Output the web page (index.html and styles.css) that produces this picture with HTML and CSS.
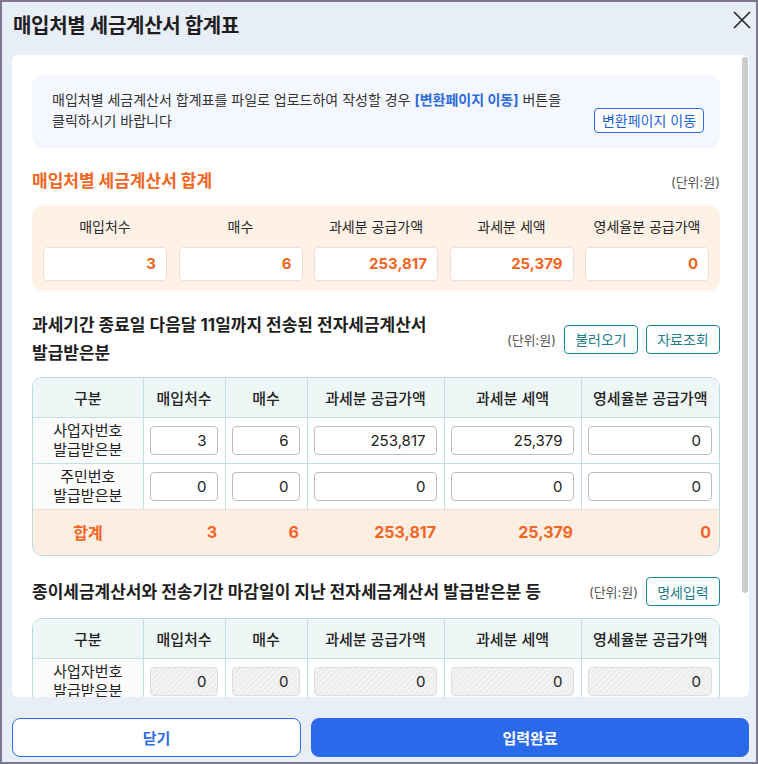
FILE: index.html
```html
<!DOCTYPE html>
<html lang="ko">
<head>
<meta charset="utf-8">
<title>매입처별 세금계산서 합계표</title>
<link rel="stylesheet" href="styles.css">
</head>
<body>
<div class="modal">
  <header class="modal-head">
    <h1 class="modal-title">매입처별 세금계산서 합계표</h1>
    <button class="close-btn" type="button" aria-label="닫기">
      <svg width="18" height="18" viewBox="0 0 18 18"><path d="M1.5 1.5L16.5 16.5M16.5 1.5L1.5 16.5" stroke="#2b2b2b" stroke-width="1.7" fill="none" stroke-linecap="round"/></svg>
    </button>
  </header>

  <div class="modal-body">
    <div class="body-content">
      <div class="notice">
        <p class="notice-text">매입처별 세금계산서 합계표를 파일로 업로드하여 작성할 경우 <strong>[변환페이지 이동]</strong> 버튼을 클릭하시기 바랍니다</p>
        <button class="btn btn-blue-line" type="button">변환페이지 이동</button>
      </div>

      <div class="section-head sec1">
        <h2 class="section-title orange">매입처별 세금계산서 합계</h2>
        <span class="unit">(단위:원)</span>
      </div>
      <div class="summary">
        <div class="summary-item"><span class="summary-label">매입처수</span><div class="summary-value">3</div></div>
        <div class="summary-item"><span class="summary-label">매수</span><div class="summary-value">6</div></div>
        <div class="summary-item"><span class="summary-label">과세분 공급가액</span><div class="summary-value">253,817</div></div>
        <div class="summary-item"><span class="summary-label">과세분 세액</span><div class="summary-value">25,379</div></div>
        <div class="summary-item"><span class="summary-label">영세율분 공급가액</span><div class="summary-value">0</div></div>
      </div>

      <div class="section-head sec2">
        <h2 class="section-title">과세기간 종료일 다음달 11일까지 전송된 전자세금계산서 발급받은분</h2>
        <div class="head-actions">
          <span class="unit">(단위:원)</span>
          <button class="btn btn-teal-line" type="button">불러오기</button>
          <button class="btn btn-teal-line" type="button">자료조회</button>
        </div>
      </div>
      <div class="table-wrap">
        <table class="grid">
          <colgroup><col class="c1"><col class="c2"><col class="c3"><col class="c4"><col class="c5"><col class="c6"></colgroup>
          <thead>
            <tr><th>구분</th><th>매입처수</th><th>매수</th><th>과세분 공급가액</th><th>과세분 세액</th><th>영세율분 공급가액</th></tr>
          </thead>
          <tbody>
            <tr>
              <th class="row-label">사업자번호<br>발급받은분</th>
              <td><input class="num" type="text" value="3"></td>
              <td><input class="num" type="text" value="6"></td>
              <td><input class="num" type="text" value="253,817"></td>
              <td><input class="num" type="text" value="25,379"></td>
              <td><input class="num" type="text" value="0"></td>
            </tr>
            <tr>
              <th class="row-label">주민번호<br>발급받은분</th>
              <td><input class="num" type="text" value="0"></td>
              <td><input class="num" type="text" value="0"></td>
              <td><input class="num" type="text" value="0"></td>
              <td><input class="num" type="text" value="0"></td>
              <td><input class="num" type="text" value="0"></td>
            </tr>
            <tr class="total">
              <th>합계</th>
              <td>3</td>
              <td>6</td>
              <td>253,817</td>
              <td>25,379</td>
              <td>0</td>
            </tr>
          </tbody>
        </table>
      </div>

      <div class="section-head sec3">
        <h2 class="section-title">종이세금계산서와 전송기간 마감일이 지난 전자세금계산서 발급받은분 등</h2>
        <div class="head-actions">
          <span class="unit">(단위:원)</span>
          <button class="btn btn-teal-line" type="button">명세입력</button>
        </div>
      </div>
      <div class="table-wrap">
        <table class="grid">
          <colgroup><col class="c1"><col class="c2"><col class="c3"><col class="c4"><col class="c5"><col class="c6"></colgroup>
          <thead>
            <tr><th>구분</th><th>매입처수</th><th>매수</th><th>과세분 공급가액</th><th>과세분 세액</th><th>영세율분 공급가액</th></tr>
          </thead>
          <tbody>
            <tr>
              <th class="row-label">사업자번호<br>발급받은분</th>
              <td><input class="num" type="text" value="0" disabled></td>
              <td><input class="num" type="text" value="0" disabled></td>
              <td><input class="num" type="text" value="0" disabled></td>
              <td><input class="num" type="text" value="0" disabled></td>
              <td><input class="num" type="text" value="0" disabled></td>
            </tr>
            <tr>
              <th class="row-label">주민번호<br>발급받은분</th>
              <td><input class="num" type="text" value="0" disabled></td>
              <td><input class="num" type="text" value="0" disabled></td>
              <td><input class="num" type="text" value="0" disabled></td>
              <td><input class="num" type="text" value="0" disabled></td>
              <td><input class="num" type="text" value="0" disabled></td>
            </tr>
            <tr class="total">
              <th>합계</th>
              <td>0</td>
              <td>0</td>
              <td>0</td>
              <td>0</td>
              <td>0</td>
            </tr>
          </tbody>
        </table>
      </div>
    </div>
    <div class="scroll-lane" aria-hidden="true"><div class="scroll-thumb"></div></div>
  </div>

  <footer class="modal-foot">
    <button class="foot-btn foot-close" type="button">닫기</button>
    <button class="foot-btn foot-submit" type="button">입력완료</button>
  </footer>
</div>
</body>
</html>
```

FILE: styles.css
```css
* { box-sizing: border-box; }

html, body {
  margin: 0;
  padding: 0;
}

body {
  font-family: Inter, "Noto Sans CJK KR", sans-serif;
  color: #222;
  background: #e8eef8;
  word-break: keep-all;
}

button, input {
  font-family: inherit;
}

.modal {
  width: 758px;
  height: 764px;
  border: 2px solid #7f7790;
  background: #e8eef8;
  display: flex;
  flex-direction: column;
}

.modal-head {
  height: 53px;
  flex-shrink: 0;
  display: flex;
  justify-content: space-between;
  align-items: flex-start;
  padding: 8px 5px 0 11px;
}

.modal-title {
  margin: 2px 0 0;
  font-size: 20px;
  line-height: 28px;
  font-weight: 700;
  color: #1e1e1e;
  letter-spacing: -0.3px;
}

.close-btn {
  border: 0;
  background: none;
  padding: 0;
  margin-top: 1px;
  width: 18px;
  height: 18px;
  display: block;
}
.close-btn svg { display: block; }

.modal-body {
  flex: 1;
  min-height: 0;
  margin: 0 7px 0 10px;
  background: #fff;
  border-radius: 6px;
  overflow: hidden;
  display: flex;
}

.body-content {
  flex: 1;
  min-width: 0;
  overflow: hidden;
  padding: 20px 21px 24px 20px;
}

.scroll-lane {
  width: 8px;
  flex-shrink: 0;
  padding: 2px 1px 0 1px;
}
.scroll-thumb {
  height: 536px;
  border-radius: 4px;
  background: #cdcdcd;
}

/* notice */
.notice {
  background: #f4f7fd;
  border-radius: 12px;
  display: flex;
  align-items: flex-end;
  gap: 10px;
  padding: 15px 16px 15px 20px;
}
.notice-text {
  flex: 1;
  margin: 0 0 2px;
  font-size: 14px;
  line-height: 20.5px;
  color: #333;
}
.notice-text strong {
  color: #2f6bd9;
  font-weight: 700;
}

.btn {
  flex-shrink: 0;
  background: #fff;
  border-radius: 4px;
  cursor: pointer;
  padding: 0;
  white-space: nowrap;
}
.btn-blue-line {
  width: 110px;
  height: 25px;
  border: 1px solid #2e6be6;
  color: #1f5fd6;
  font-size: 14px;
  line-height: 23px;
}
.btn-teal-line {
  width: 74px;
  height: 29px;
  border: 1px solid #1c8795;
  color: #1d7d8a;
  font-size: 14px;
}

/* section heads */
.section-head {
  display: flex;
  align-items: center;
  justify-content: space-between;
  gap: 12px;
}
.section-title {
  margin: 0;
  font-size: 17px;
  font-weight: 700;
  line-height: 28px;
  color: #1f1f1f;
}
.section-title.orange { color: #f26522; line-height: 24px; }

.unit {
  font-size: 13px;
  color: #555;
  white-space: nowrap;
}

.head-actions {
  display: flex;
  align-items: center;
  gap: 8px;
  flex-shrink: 0;
}

.sec1 { margin-top: 21px; }
.sec2 { margin-top: 20px; margin-bottom: 10px; }
.sec3 { margin-top: 21px; margin-bottom: 12px; }

/* summary */
.summary {
  margin-top: 12px;
  background: #fef1e6;
  border-radius: 12px;
  padding: 12px 11px 10px;
  display: grid;
  grid-template-columns: repeat(5, 1fr);
  column-gap: 11.5px;
}
.summary-item {
  display: flex;
  flex-direction: column;
  align-items: stretch;
}
.summary-label {
  text-align: center;
  font-size: 14px;
  line-height: 20px;
  color: #2a2a2a;
  margin-bottom: 10px;
}
.summary-value {
  height: 34px;
  background: #fff;
  border: 1px solid #f8dccb;
  border-radius: 4px;
  text-align: right;
  padding-right: 10px;
  font-size: 15px;
  font-weight: 700;
  line-height: 32px;
  color: #f26522;
}

/* tables */
.table-wrap {
  border: 1px solid #b9dbe0;
  border-radius: 10px;
  overflow: hidden;
}
.grid {
  width: 100%;
  border-collapse: collapse;
  table-layout: fixed;
}
.grid col.c1 { width: 110px; }
.grid col.c2 { width: 82px; }
.grid col.c3 { width: 82px; }
.grid col.c4 { width: 137px; }
.grid col.c5 { width: 137px; }

.grid th, .grid td {
  border-left: 1px solid #c3dfe3;
  border-top: 1px solid #c3dfe3;
  padding: 0;
}
.grid tr > :first-child { border-left: 0; }
.grid thead tr:first-child th { border-top: 0; }

.grid thead th {
  height: 39px;
  background: #eef7f6;
  font-size: 15px;
  font-weight: 500;
  color: #222;
  white-space: nowrap;
}

.grid tbody tr { height: 46px; }

.grid .row-label {
  background: #fbfbfb;
  font-size: 15px;
  font-weight: 400;
  line-height: 19px;
  color: #222;
}

.grid tbody td {
  padding: 0 7px 0 6px;
}

.num {
  display: block;
  width: 100%;
  height: 29px;
  border: 1px solid #bdbdbd;
  border-radius: 4px;
  background: #fff;
  text-align: right;
  padding: 0 10px 0 6px;
  font-size: 15px;
  color: #222;
  outline: none;
}
.num:disabled {
  border-color: #dddddd;
  color: #222;
  background: repeating-linear-gradient(135deg, #ececec 0 2px, #f4f4f4 2px 4px);
  -webkit-text-fill-color: #222;
  opacity: 1;
}

.grid tr.total {
  background: #fdeee2;
}
.grid tr.total th,
.grid tr.total td {
  border-left: 0;
  border-top: 1px solid #f3dccb;
  color: #f26522;
  font-weight: 700;
}
.grid tr.total th {
  font-size: 16px;
}
.grid tr.total td {
  text-align: right;
  padding: 0 8px 0 0;
  font-size: 16px;
}

/* footer */
.modal-foot {
  flex-shrink: 0;
  display: grid;
  grid-template-columns: 289px 1fr;
  gap: 10px;
  padding: 21px 7px 5px 10px;
}
.foot-btn {
  height: 39px;
  border-radius: 8px;
  font-size: 15px;
  font-weight: 700;
  cursor: pointer;
}
.foot-close {
  background: #fff;
  border: 1px solid #2e6ee8;
  color: #2e6ee8;
}
.foot-submit {
  background: #2a6aea;
  border: 1px solid #2a6aea;
  color: #fff;
}
```
